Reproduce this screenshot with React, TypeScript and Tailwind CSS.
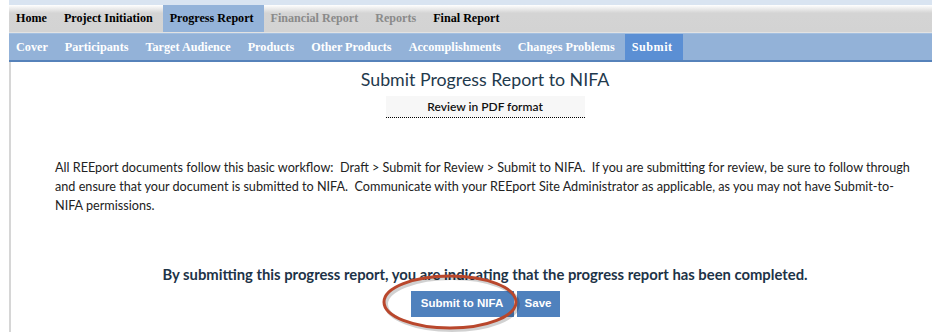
import React from "react";

const topTabs = [
  { label: "Home", state: "normal" },
  { label: "Project Initiation", state: "normal" },
  { label: "Progress Report", state: "active" },
  { label: "Financial Report", state: "disabled" },
  { label: "Reports", state: "disabled" },
  { label: "Final Report", state: "normal" },
];

const subTabs = [
  "Cover",
  "Participants",
  "Target Audience",
  "Products",
  "Other Products",
  "Accomplishments",
  "Changes Problems",
  "Submit",
];

export default function App() {
  return (
    <div className="relative w-[932px] h-[332px] overflow-hidden bg-white pl-[9px]">
      <div className="w-[950px]">
        {/* top strip */}
        <div className="h-[5px] bg-[#d9e4f1]" />

        {/* main menu */}
        <div className="flex h-[28px] bg-gradient-to-b from-white via-[#d4d4d4] via-30% to-[#d3d3d3] border-b border-[#e2e2e2] font-['Liberation_Serif',serif] text-[12.1px] font-bold">
          {topTabs.map((t) => (
            <div
              key={t.label}
              className={`flex items-center pl-[7px] pr-[10px] ${
                t.state === "active"
                  ? "bg-[#94b3d9] text-black"
                  : t.state === "disabled"
                  ? "text-[#8a8a8a]"
                  : "text-black"
              }`}
            >
              {t.label}
            </div>
          ))}
        </div>

        {/* sub menu */}
        <div className="flex h-[29px] bg-[#93b2d8] border-t border-[#a3bfe0] border-b-2 border-b-[#5682ba] font-['Liberation_Serif',serif] text-[12.2px] font-bold text-white">
          {subTabs.map((s) => (
            <div
              key={s}
              className={`flex items-center pl-[7px] pr-[10px] ${
                s === "Submit" ? "bg-[#5b8fd4] tracking-[0.5px]" : ""
              }`}
            >
              {s}
            </div>
          ))}
        </div>

        {/* content */}
        <div className="border-l-2 border-[#d6d6d6] h-[272px] font-['Lato',sans-serif] text-[#1c1c1c]">
          <div className="flex flex-col items-center pt-[5px]">
            <h1 className="text-[17.8px] text-[#1f3a4d] leading-[24px]">
              Submit Progress Report to NIFA
            </h1>
            <div className="mt-[5px] w-[199px] h-[22px] bg-[#f7f7f7] border-b border-dotted border-black flex items-center justify-center text-[12px] font-semibold text-[#111]">
              Review in PDF format
            </div>
          </div>

          <p className="mt-[40px] ml-[44px] w-[862px] text-[12.65px] leading-[19px] text-[#222]">
            All REEport documents follow this basic workflow:&nbsp; Draft &gt; Submit for Review &gt; Submit to NIFA.&nbsp; If you are
            submitting for review, be sure to follow through and ensure that your document is submitted to NIFA.&nbsp; Communicate
            with your REEport Site Administrator as applicable, as you may not have Submit-to-NIFA permissions.
          </p>

          <div className="flex flex-col items-center mt-[50px]">
            <p className="text-[14.8px] font-bold text-[#1d3347] leading-[18px]">
              By submitting this progress report, you are indicating that the progress report has been completed.
            </p>
            <div className="flex gap-[3px] mt-[8px] font-['Liberation_Sans',sans-serif] text-[11.5px] font-bold text-white">
              <button className="w-[103px] h-[26px] bg-[#4f81bd]">Submit to NIFA</button>
              <button className="w-[43px] h-[26px] bg-[#4f81bd]">Save</button>
            </div>
          </div>
        </div>
      </div>

      {/* red annotation ellipse */}
      <svg className="absolute left-[378px] top-[270px]" width="146" height="64" viewBox="0 0 146 64">
        <ellipse cx="74" cy="34" rx="66" ry="26" fill="none" stroke="#000" strokeOpacity="0.18" strokeWidth="4" />
        <ellipse cx="72" cy="32" rx="66" ry="26" fill="none" stroke="#b9472c" strokeWidth="3" />
      </svg>
    </div>
  );
}
